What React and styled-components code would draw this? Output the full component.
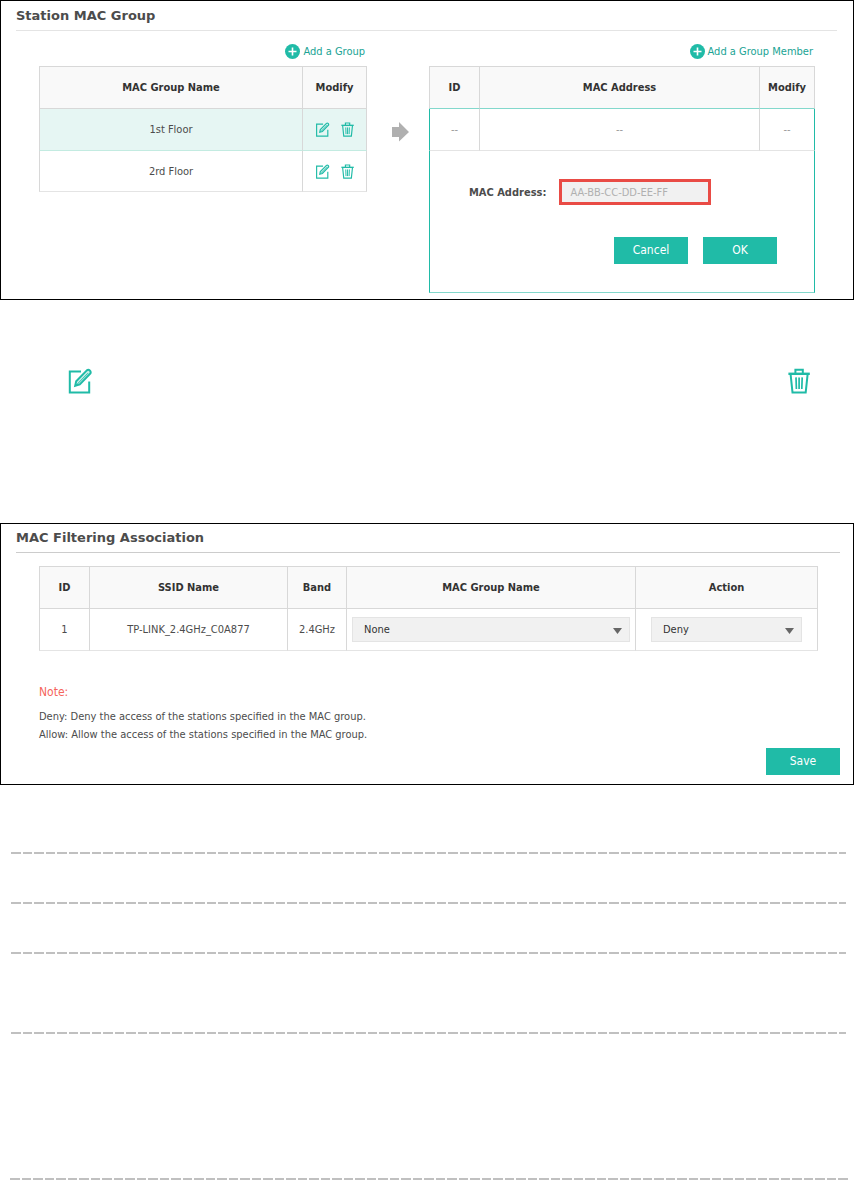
import { useState } from "react";
import styled, { createGlobalStyle } from 'styled-components';

const groups = ["1st Floor", "2rd Floor"];

function PlusIcon() {
  return (
    <svg width="15" height="15" viewBox="0 0 15 15" aria-hidden="true">
      <circle cx="7.5" cy="7.5" r="7.5" fill="#20bba7" />
      <path d="M3.5 7.5h8M7.5 3.5v8" stroke="#fff" strokeWidth="1.6" />
    </svg>
  );
}

function EditIcon({ size }) {
  return (
    <svg width={size} height={size} viewBox="0 0 26 26" fill="none" stroke="#20bba7" aria-hidden="true">
      <path d="M14 3.600H2.800v20.800h19.400V13.500" strokeWidth="2" />
      <path d="M8.200 17.800l1-4.600L19.800 2.400q1.600-1.200 3 .1t.6 3L12.800 16.400z" strokeWidth="2" fill="#c9eee8" />
      <path d="M9.400 17L21 5.200" strokeWidth="1" />
    </svg>
  );
}

function TrashIcon({ size }) {
  return (
    <svg width={size} height={size} viewBox="0 0 26 26" fill="none" stroke="#20bba7" aria-hidden="true">
      <path d="M9.400 5V1.800h7.400V5" strokeWidth="2" />
      <path d="M2.400 5.800h21.400" strokeWidth="2.400" />
      <path d="M4.600 6.400l1.900 18h13.200l1.900-18" strokeWidth="2" />
      <path d="M10 9.400l.4 11.600M13.100 9.400V21M16.200 9.400L15.800 21" strokeWidth="1.700" />
    </svg>
  );
}

function Dropdown({ label, value, options, onChange }) {
  return (
    <SelectBox>
      <select aria-label={label} value={value} onChange={(e) => onChange(e.target.value)}>
        {options.map((o) => <option key={o}>{o}</option>)}
      </select>
      <svg width="9" height="6" viewBox="0 0 9 6" aria-hidden="true">
        <path d="M0 0h9L4.5 6z" fill="#666" />
      </svg>
    </SelectBox>
  );
}

function App() {
  const [selected, setSelected] = useState("1st Floor");
  const [mac, setMac] = useState("");
  const [group, setGroup] = useState("None");
  const [action, setAction] = useState("Deny");

  return (
    <Page>
      <GlobalStyle />

      <Panel>
        <Title $light>Station MAC Group</Title>
        <Columns>
          <Side $grow={328}>
            <AddButton type="button"><PlusIcon />Add a Group</AddButton>
            <Table>
              <colgroup>
                <col />
                <col width="64" />
              </colgroup>
              <thead>
                <tr>
                  <th>MAC Group Name</th>
                  <th>Modify</th>
                </tr>
              </thead>
              <tbody>
                {groups.map((name) => (
                  <GroupRow key={name} $selected={name === selected} onClick={() => setSelected(name)}>
                    <td>{name}</td>
                    <td>
                      <Actions>
                        <IconButton type="button" aria-label={`Edit ${name}`}><EditIcon size={15} /></IconButton>
                        <IconButton type="button" aria-label={`Delete ${name}`}><TrashIcon size={15} /></IconButton>
                      </Actions>
                    </td>
                  </GroupRow>
                ))}
              </tbody>
            </Table>
          </Side>

          <Arrow>
            <svg width="17" height="20" viewBox="0 0 17 20" aria-hidden="true">
              <path d="M0 5h7V0l10 10-10 9.500V15H0z" fill="#b0b0b0" />
            </svg>
          </Arrow>

          <Side $grow={386}>
            <AddButton type="button"><PlusIcon />Add a Group Member</AddButton>
            <MemberTable>
              <colgroup>
                <col width="51" />
                <col />
                <col width="55" />
              </colgroup>
              <thead>
                <tr>
                  <th>ID</th>
                  <th>MAC Address</th>
                  <th>Modify</th>
                </tr>
              </thead>
              <tbody>
                <tr>
                  <td>--</td>
                  <td>--</td>
                  <td>--</td>
                </tr>
                <tr>
                  <td colSpan="3">
                    <MemberForm onSubmit={(e) => e.preventDefault()}>
                      <Field>
                        <label htmlFor="mac">MAC Address:</label>
                        <input
                          id="mac"
                          placeholder="AA-BB-CC-DD-EE-FF"
                          value={mac}
                          onChange={(e) => setMac(e.target.value)}
                        />
                      </Field>
                      <Buttons>
                        <Button type="button">Cancel</Button>
                        <Button type="submit">OK</Button>
                      </Buttons>
                    </MemberForm>
                  </td>
                </tr>
              </tbody>
            </MemberTable>
          </Side>
        </Columns>
      </Panel>

      <Legend>
        <EditIcon size={26} />
        <TrashIcon size={26} />
      </Legend>

      <Panel>
        <Title>MAC Filtering Association</Title>
        <Association>
          <Table>
            <colgroup>
              <col width="51" />
              <col width="198" />
              <col width="59" />
              <col />
              <col width="182" />
            </colgroup>
            <thead>
              <tr>
                <th>ID</th>
                <th>SSID Name</th>
                <th>Band</th>
                <th>MAC Group Name</th>
                <th>Action</th>
              </tr>
            </thead>
            <tbody>
              <tr>
                <td>1</td>
                <td>TP-LINK_2.4GHz_C0A877</td>
                <td>2.4GHz</td>
                <SelectCell $pad={5}>
                  <Dropdown label="MAC Group Name" value={group} options={["None", ...groups]} onChange={setGroup} />
                </SelectCell>
                <SelectCell $pad={15}>
                  <Dropdown label="Action" value={action} options={["Deny", "Allow"]} onChange={setAction} />
                </SelectCell>
              </tr>
            </tbody>
          </Table>
          <Note>
            <h3>Note:</h3>
            <p>Deny: Deny the access of the stations specified in the MAC group.</p>
            <p>Allow: Allow the access of the stations specified in the MAC group.</p>
          </Note>
        </Association>
        <Footer>
          <Button type="button">Save</Button>
        </Footer>
      </Panel>

      <Rules>
        <Dashes />
        <Dashes $gap={48} />
        <Dashes $gap={48} />
        <Dashes $gap={78} />
        <Dashes $gap={144} />
      </Rules>
    </Page>
  );
}

export default App;

const GlobalStyle = createGlobalStyle`
  * {
    box-sizing: border-box;
  }

  body {
    margin: 0;
    background: #fff;
  }

  body, button, input, select {
    font-family: "DejaVu Sans Condensed", "DejaVu Sans", sans-serif;
    font-size: 11px;
  }
`;

const Page = styled.main`
  color: #4c4c4c;
`;

const Panel = styled.section`
  border: 1px solid #000;
  padding: 0 13px 6px 15px;
`;

const Title = styled.h2`
  margin: 0 ${(p) => (p.$light ? 3 : 0)}px 0 0;
  border-bottom: 1px solid ${(p) => (p.$light ? '#e4e4e4' : '#ccc')};
  font-family: "DejaVu Sans", sans-serif;
  font-size: 13px;
  line-height: ${(p) => (p.$light ? 29 : 28)}px;
  color: #4c4c4c;
`;

const Columns = styled.div`
  display: flex;
  align-items: flex-start;
  padding: 13px 25px 0 23px;
`;

const Side = styled.div`
  display: flex;
  flex-direction: column;
  flex: ${(p) => p.$grow} 1 0;
  min-width: 0;
`;

const Arrow = styled.div`
  flex: 0 0 62px;
  padding: 78px 0 0 25px;
`;

const AddButton = styled.button`
  display: flex;
  align-items: center;
  align-self: flex-end;
  gap: 3px;
  height: 15px;
  margin-bottom: 7px;
  padding: 0 2px;
  border: 0;
  background: none;
  color: #20a394;
  cursor: pointer;
`;

const Table = styled.table`
  width: 100%;
  table-layout: fixed;
  border-collapse: separate;
  border-spacing: 0;
  border-top: 1px solid #d8d8d8;

  th, td {
    height: 42px;
    padding: 0;
    border-right: 1px solid #d8d8d8;
    border-bottom: 1px solid #e4e4e4;
    text-align: center;
  }

  th {
    border-bottom-color: #d8d8d8;
    background: #f9f9f9;
    color: #333;
  }

  th:first-child, td:first-child {
    border-left: 1px solid #d8d8d8;
  }
`;

const GroupRow = styled.tr`
  background: ${(p) => (p.$selected ? '#e6f6f3' : '#fff')};
  cursor: pointer;

  && td {
    border-bottom-color: ${(p) => (p.$selected ? '#c3ebe1' : '#e4e4e4')};
  }

  &&:last-child td {
    height: 41px;
  }
`;

const Actions = styled.div`
  display: flex;
  justify-content: center;
  gap: 10px;
`;

const IconButton = styled.button`
  display: flex;
  padding: 0;
  border: 0;
  background: none;
  cursor: pointer;
`;

const MemberTable = styled(Table)`
  && th {
    border-bottom-color: #83d8cc;
  }

  && td {
    color: #999;
  }

  && td:first-child {
    border-left-color: #20bba7;
  }

  && td:last-child {
    border-right-color: #20bba7;
  }

  && tr:last-child td {
    border-bottom-color: #83d8cc;
  }
`;

const MemberForm = styled.form`
  display: flex;
  flex-direction: column;
  gap: 32px;
  padding: 28px 37px 28px 39px;
`;

const Field = styled.div`
  display: flex;
  align-items: center;
  gap: 13px;

  label {
    color: #4c4c4c;
    font-weight: bold;
  }

  input {
    width: 152px;
    height: 26px;
    padding: 0 8px;
    border: 3px solid #e94b45;
    border-radius: 0;
    background: #f1f1f1;
    color: #4c4c4c;
  }

  input::placeholder {
    color: #b0b0b0;
  }
`;

const Buttons = styled.div`
  display: flex;
  justify-content: flex-end;
  gap: 15px;
`;

const Button = styled.button`
  width: 74px;
  height: 27px;
  padding: 0 0 2px;
  border: 0;
  background: #20bba7;
  color: #fff;
  font-size: 12px;
  cursor: pointer;
`;

const Legend = styled.div`
  display: flex;
  justify-content: space-between;
  padding: 68px 42px 129px 67px;
`;

const Association = styled.div`
  padding: 13px 22px 0 23px;
`;

const SelectCell = styled.td`
  && {
    padding: 0 ${(p) => p.$pad}px;
  }
`;

const SelectBox = styled.div`
  position: relative;

  select {
    display: block;
    width: 100%;
    height: 25px;
    padding: 0 11px;
    appearance: none;
    border: 1px solid #e4e4e4;
    border-radius: 0;
    background: #f1f1f1;
    color: #333;
  }

  svg {
    position: absolute;
    top: 11px;
    right: 8px;
    pointer-events: none;
  }
`;

const Note = styled.div`
  padding-top: 32px;
  line-height: 18px;

  h3 {
    margin: 0 0 7px;
    color: #f5655c;
    font-size: 12px;
    font-weight: normal;
  }

  p {
    margin: 0;
  }
`;

const Footer = styled.div`
  display: flex;
  justify-content: flex-end;
  padding: 4px 0 3px;
`;

const Rules = styled.div`
  padding: 67px 8px 0 11px;
`;

const Dashes = styled.hr`
  height: 2px;
  margin: ${(p) => p.$gap || 0}px 0 0;
  border: 0;
  background: repeating-linear-gradient(
    to right,
    #c0c0c0 0 10px,
    #fff 10px 12px,
    #c0c0c0 12px 21px,
    #fff 21px 23px
  );

  &:last-child {
    margin-left: -1px;
    margin-right: -3px;
  }
`;
